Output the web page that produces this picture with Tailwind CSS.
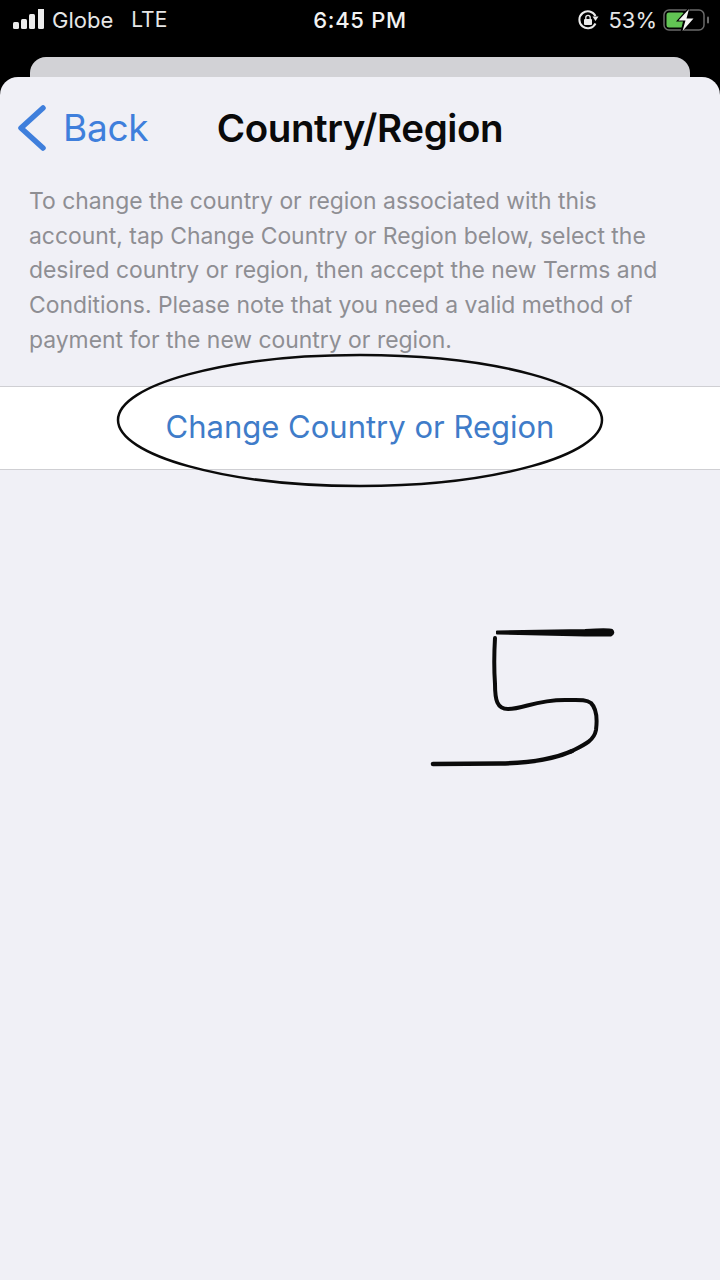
<!DOCTYPE html>
<html lang="en">
<head>
    <meta charset="UTF-8">
    <meta name="viewport" content="width=device-width, initial-scale=1.0">
    <title>Country/Region</title>
    <script src="https://cdn.jsdelivr.net/npm/@tailwindcss/browser@4"></script>
</head>
<body class="bg-black">
    <div class="relative w-[720px] h-[1280px] overflow-hidden bg-black font-['Inter','Liberation_Sans',sans-serif]">

        <!-- status bar -->
        <div class="relative h-[40px] flex items-center justify-between pl-[12px] pr-[11px] text-[#e6e6e6] text-[22px]">
            <div class="flex items-center">
                <svg width="33" height="22" viewBox="0 0 33 22" fill="#ececec">
                    <rect x="1" y="13" width="6" height="7" rx="1.500"/>
                    <rect x="9" y="10" width="6" height="10" rx="1.500"/>
                    <rect x="17" y="5" width="6" height="15" rx="1.500"/>
                    <rect x="26" y="-1" width="6" height="21" rx="1.500"/>
                </svg>
                <span class="ml-[7px] font-normal">Globe</span>
                <span class="ml-[18px] text-[21px]">LTE</span>
            </div>
            <span class="absolute left-0 right-0 text-center font-medium text-[#f2f2f2] tracking-[0.7px]">6:45 PM</span>
            <div class="flex items-center">
                <svg width="22" height="22" viewBox="0 0 22 22" fill="none" stroke="#ececec">
                    <path d="M18.500 14.500 A8.500 8.500 0 1 1 18.500 7" stroke-width="2"/>
                    <path d="M15.500 7.500 L21.500 7.500 L18.500 12 Z" fill="#ececec" stroke="none"/>
                    <rect x="7" y="10" width="8" height="6" rx="1" fill="#ececec" stroke="none"/>
                    <path d="M8.800 10 V8.500 a2.200 2.200 0 0 1 4.400 0 V10" stroke-width="1.300"/>
                </svg>
                <span class="ml-[9px]">53%</span>
                <svg class="ml-[6px]" width="46" height="26" viewBox="0 0 46 26" fill="none">
                    <rect x="1" y="3" width="40" height="20" rx="5" stroke="#6a6a6a" stroke-width="1.500"/>
                    <rect x="3.500" y="5.500" width="18" height="15" rx="2.500" fill="#62c554"/>
                    <rect x="44" y="9.500" width="2" height="7" rx="1" fill="#6a6a6a"/>
                    <path d="M27 -1 L13 14.500 H20 L17 27 L32.500 10.500 H25 Z" fill="#000"/>
                    <path d="M26 2 L15.500 13.500 H22.500 L19.500 24 L30.500 11.500 H23.500 Z" fill="#f5f5f5"/>
                </svg>
            </div>
        </div>

        <!-- card behind -->
        <div class="absolute left-[30px] top-[57px] w-[660px] h-[40px] rounded-t-[16px] bg-[#d2d2d6]"></div>

        <!-- sheet -->
        <div class="absolute left-0 top-[77px] w-[720px] h-[1203px] rounded-t-[18px] bg-[#f0f0f6]">
            <div class="relative h-[102px] flex items-center justify-center">
                <div class="absolute left-[18px] top-[28px] flex items-center text-[#3f7fdc]">
                    <svg width="28" height="46" viewBox="0 0 28 46" fill="none" stroke="#3f7fdc" stroke-width="5.500" stroke-linecap="round" stroke-linejoin="round">
                        <path d="M25 3 L3 23 L25 43"/>
                    </svg>
                    <span class="ml-[17px] text-[37px] leading-[46px] tracking-[-0.3px]">Back</span>
                </div>
                <h1 class="text-[38.500px] leading-[46px] font-semibold text-[#0a0a0a] tracking-[-0.4px]">Country/Region</h1>
            </div>
            <p class="px-[29px] pt-[5px] text-[22.900px] leading-[34.700px] text-[#8e8e93]">To change the country or region associated with this account, tap Change Country or Region below, select the desired country or region, then accept the new Terms and Conditions. Please note that you need a valid method of payment for the new country or region.</p>
            <div class="mt-[28px] h-[84px] bg-white border-y border-[#cfcfd3] flex items-center justify-center text-[31px] text-[#3f7cc9]">Change Country or Region</div>
        </div>

        <!-- hand drawn marks on top of the screenshot -->
        <svg class="absolute left-0 top-0" width="720" height="1280" viewBox="0 0 720 1280" fill="none" stroke="#0b0b0b" stroke-linecap="round" stroke-linejoin="round">
            <path d="M118 420 C118 385 225 355 360 355 C495 355 602 385 602 420 C602 455 495 486 360 486 C225 486 118 455 118 420 Z" stroke-width="2.500"/>
            <path d="M497 631.500 L585 630 Q609 628.500 612 630 Q615 633 611 635.500 L585 635.500 L497 633.500 Z" fill="#0b0b0b" stroke-width="2"/>
            <path d="M495 638 C494 655 494 670 495 684 C495 700 497 709 508 709 C524 709 535 700 565 700 C578 700 586 699 591 703 C597 709 597 722 596 730 C594 741 584 745 570 752" stroke-width="4"/>
            <path d="M572 751 C552 760 530 763 500 763.500 L433 764" stroke-width="4.500"/>
        </svg>
    </div>
</body>
</html>
